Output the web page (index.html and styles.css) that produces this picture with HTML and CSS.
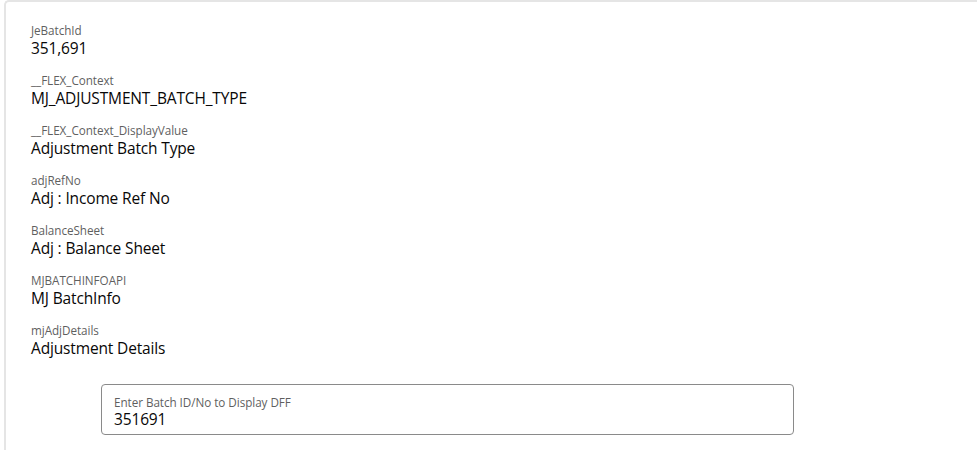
FILE: index.html
```html
<!DOCTYPE html>
<html>
<head>
<meta charset="utf-8">
<link rel="stylesheet" href="styles.css">
</head>
<body>
<div class="card">
  <div class="field"><div class="label">JeBatchId</div><div class="value">351,691</div></div>
  <div class="field"><div class="label">__FLEX_Context</div><div class="value">MJ_ADJUSTMENT_BATCH_TYPE</div></div>
  <div class="field"><div class="label">__FLEX_Context_DisplayValue</div><div class="value">Adjustment Batch Type</div></div>
  <div class="field"><div class="label">adjRefNo</div><div class="value">Adj : Income Ref No</div></div>
  <div class="field"><div class="label">BalanceSheet</div><div class="value">Adj : Balance Sheet</div></div>
  <div class="field"><div class="label">MJBATCHINFOAPI</div><div class="value">MJ BatchInfo</div></div>
  <div class="field"><div class="label">mjAdjDetails</div><div class="value">Adjustment Details</div></div>
  <div class="input-wrap">
    <div class="input-box">
      <div class="input-label">Enter Batch ID/No to Display DFF</div>
      <div class="input-value">351691</div>
    </div>
  </div>
</div>
</body>
</html>
```

FILE: styles.css
```css
html, body {
  margin: 0;
  padding: 0;
  background: #ffffff;
}
body {
  font-family: "Open Sans", "Noto Sans", sans-serif;
  color: #080707;
  overflow: hidden;
  height: 450px;
}
.card {
  box-sizing: border-box;
  margin-left: 4px;
  border-top: 2px solid #e5e5e5;
  border-left: 2px solid #e5e5e5;
  border-top-left-radius: 5px;
  padding: 20px 0 0 25px;
  height: 450px;
}
.field {
  margin-bottom: 14px;
}
.label {
  font-size: 11.7px;
  line-height: 16px;
  color: #5f5f5f;
  letter-spacing: -0.05px;
}
.value {
  font-size: 15.5px;
  line-height: 20px;
  color: #080707;
  letter-spacing: -0.15px;
}
.input-wrap {
  padding: 12px 0 0 70px;
}
.input-box {
  width: 667px;
  height: 49px;
  border: 1px solid #8a8a8a;
  border-radius: 4px;
  padding: 0 12px;
}
.input-label {
  margin-top: 9px;
  font-size: 11.7px;
  line-height: 16px;
  color: #5f5f5f;
  letter-spacing: -0.05px;
}
.input-value {
  font-size: 15.5px;
  line-height: 18px;
  color: #080707;
  letter-spacing: -0.15px;
}
```
